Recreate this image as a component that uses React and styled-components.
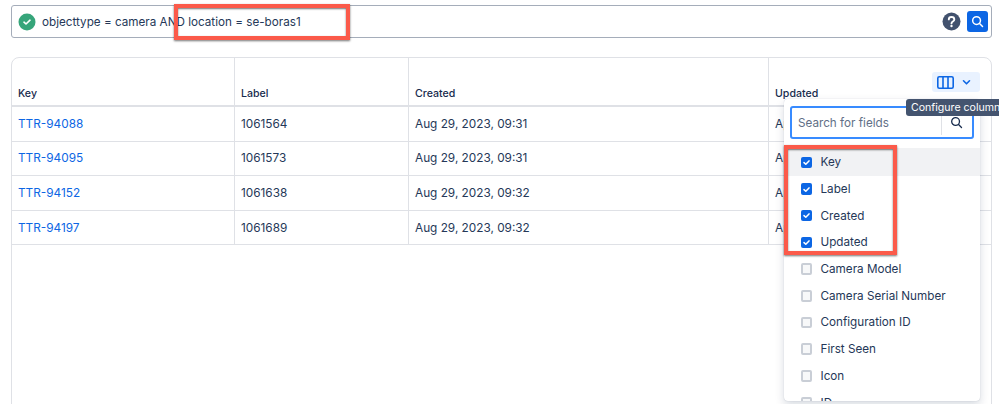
import React from "react";
import styled, { createGlobalStyle } from "styled-components";

const Global = createGlobalStyle`
  html, body { margin: 0; padding: 0; background: #fff; }
  body { font-family: Inter, "Liberation Sans", sans-serif; color: #253858; overflow: hidden; }
  * { box-sizing: border-box; }
`;

const Page = styled.div`
  position: relative;
  width: 999px;
  height: 404px;
  overflow: hidden;
  padding: 5px 7px 0 11px;
  display: flex;
  flex-direction: column;
  gap: 19px;
`;

const QueryBar = styled.div`
  height: 33px;
  border: 1px solid #a5adba;
  border-radius: 3px;
  display: flex;
  align-items: center;
  padding: 0 3px 0 6px;
  font-size: 11.7px;
  color: #253858;
`;

const QueryText = styled.span`
  margin-left: 6px;
  flex: 1;
`;

const HelpIcon = styled.svg`
  width: 19px;
  height: 19px;
  margin-right: 6px;
`;

const SearchButton = styled.button`
  width: 21px;
  height: 21px;
  border: 0;
  padding: 0;
  border-radius: 3px;
  background: #0c66e4;
  display: flex;
  align-items: center;
  justify-content: center;
`;

const TableWrap = styled.div`
  flex: 1;
  margin-bottom: -8px;
  border: 1px solid #dfe1e6;
  border-radius: 8px 8px 0 0;
  display: flex;
  flex-direction: column;
`;

const Row = styled.div`
  display: grid;
  grid-template-columns: 223px 174px 360px 1fr;
  height: ${(p) => p.$h}px;
  border-bottom: ${(p) => p.$head ? "2px" : "1px"} solid #dfe1e6;
`;

const HeadCell = styled.div`
  display: flex;
  align-items: flex-end;
  padding: 0 6px 5px 6px;
  font-size: 10.6px;
  font-weight: 500;
  color: #172b4d;
  border-right: 1px solid #dfe1e6;
  &:last-child { border-right: 0; }
`;

const Cell = styled.div`
  display: flex;
  align-items: center;
  padding: 0 6px;
  font-size: 11.8px;
  color: #253858;
  border-right: 1px solid #dfe1e6;
  overflow: hidden;
  white-space: nowrap;
  &:last-child { border-right: 0; }
`;

const IssueLink = styled.a`
  color: #0c66e4;
`;

const ColumnsButton = styled.div`
  position: absolute;
  left: 932px;
  top: 72px;
  width: 48px;
  height: 20px;
  border-radius: 3px;
  background: #e9f2ff;
  display: flex;
  align-items: center;
  gap: 8px;
  padding-left: 5px;
`;

const Tooltip = styled.div`
  position: absolute;
  left: 906px;
  top: 99px;
  width: 110px;
  height: 17px;
  border-radius: 3px;
  background: #44546f;
  color: #fff;
  font-size: 10.6px;
  line-height: 17px;
  padding-left: 5px;
  white-space: nowrap;
  z-index: 3;
`;

const Popup = styled.div`
  position: absolute;
  left: 784px;
  top: 99px;
  width: 196px;
  height: 302px;
  background: #fff;
  border-radius: 4px;
  box-shadow: 0 4px 10px rgba(9, 30, 66, 0.16), 0 0 1px rgba(9, 30, 66, 0.25);
  overflow: hidden;
  z-index: 2;
`;

const FieldSearch = styled.div`
  margin: 7px 6px 0;
  height: 33px;
  border: 2px solid #388bff;
  border-radius: 3px;
  display: flex;
  align-items: center;
  padding-left: 6px;
`;

const FieldPlaceholder = styled.span`
  flex: 1;
  font-size: 11.7px;
  color: #626f86;
`;

const FieldIconBox = styled.span`
  width: 31px;
  height: 25px;
  padding-right: 2px;
  border-left: 1px solid #dfe1e6;
  display: flex;
  align-items: center;
  justify-content: center;
`;

const FieldList = styled.div`
  margin-top: 9px;
  border-top: 1px solid #f1f2f4;
`;

const FieldRow = styled.div`
  height: 26.7px;
  display: flex;
  align-items: center;
  gap: 8.5px;
  padding-left: 16.5px;
  font-size: 11.7px;
  color: #253858;
  background: ${(p) => (p.$active ? "#f1f2f4" : "transparent")};
`;

const Box = styled.span`
  width: 11.5px;
  height: 11.5px;
  border-radius: 2px;
  background: ${(p) => (p.$on ? "#0c66e4" : "#f7f8f9")};
  border: ${(p) => (p.$on ? "0" : "2px solid #c9ced6")};
  display: flex;
  align-items: center;
  justify-content: center;
  flex: none;
`;

const Highlight = styled.div`
  position: absolute;
  left: ${(p) => p.$x}px;
  top: ${(p) => p.$y}px;
  width: ${(p) => p.$w}px;
  height: ${(p) => p.$h}px;
  border: 4px solid #fb5a4a;
  box-shadow: 0 1px 2px rgba(0, 0, 0, 0.55), inset 0 1px 2px rgba(0, 0, 0, 0.55);
  z-index: 5;
`;

const Magnifier = ({ size = 14, color = "#fff", sw = 1.6 }) => (
  <svg width={size} height={size} viewBox="0 0 14 14" fill="none">
    <circle cx="6" cy="6" r="4.2" stroke={color} strokeWidth={sw} />
    <path d="M9.2 9.2 12.4 12.4" stroke={color} strokeWidth={sw} strokeLinecap="round" />
  </svg>
);

const Check = () => (
  <svg width="9" height="9" viewBox="0 0 9 9" fill="none">
    <path d="M2 4.6 3.8 6.3 7 2.9" stroke="#fff" strokeWidth="1.5" strokeLinecap="round" strokeLinejoin="round" />
  </svg>
);

const rows = [
  ["TTR-94088", "1061564", "Aug 29, 2023, 09:31"],
  ["TTR-94095", "1061573", "Aug 29, 2023, 09:31"],
  ["TTR-94152", "1061638", "Aug 29, 2023, 09:32"],
  ["TTR-94197", "1061689", "Aug 29, 2023, 09:32"],
];

const fields = [
  ["Key", true],
  ["Label", true],
  ["Created", true],
  ["Updated", true],
  ["Camera Model", false],
  ["Camera Serial Number", false],
  ["Configuration ID", false],
  ["First Seen", false],
  ["Icon", false],
  ["ID", false],
];

export default function App() {
  return (
    <Page>
      <Global />
      <QueryBar>
        <svg width="18" height="18" viewBox="0 0 18 18" fill="none">
          <circle cx="9" cy="9" r="8.5" fill="#36a57a" />
          <path d="M6 9.2 8 11 12 7.2" stroke="#fff" strokeWidth="1.6" strokeLinecap="round" strokeLinejoin="round" />
        </svg>
        <QueryText>objecttype = camera AND location = se-boras1</QueryText>
        <HelpIcon viewBox="0 0 19 19">
          <circle cx="9.5" cy="9.5" r="9" fill="#42526e" />
          <path d="M6.8 7.4C6.8 5.9 8 5 9.5 5s2.8.9 2.8 2.4c0 2.2-2.8 2.1-2.8 4" fill="none" stroke="#fff" strokeWidth="1.9" strokeLinecap="round" />
          <circle cx="9.5" cy="14" r="1.2" fill="#fff" />
        </HelpIcon>
        <SearchButton aria-label="Search"><Magnifier size={13} /></SearchButton>
      </QueryBar>
      <TableWrap>
        <Row $head $h={49}>
          <HeadCell>Key</HeadCell>
          <HeadCell>Label</HeadCell>
          <HeadCell>Created</HeadCell>
          <HeadCell>Updated</HeadCell>
        </Row>
        {rows.map((r) => (
          <Row key={r[0]} $h={34.6}>
            <Cell><IssueLink>{r[0]}</IssueLink></Cell>
            <Cell>{r[1]}</Cell>
            <Cell>{r[2]}</Cell>
            <Cell>Ap</Cell>
          </Row>
        ))}
      </TableWrap>
      <ColumnsButton>
        <svg width="17" height="13" viewBox="0 0 17 13" fill="none">
          <rect x="0.8" y="0.8" width="15.4" height="11.4" rx="1.5" stroke="#0c66e4" strokeWidth="1.6" />
          <path d="M6 1V12M11 1V12" stroke="#0c66e4" strokeWidth="1.6" />
        </svg>
        <svg width="9" height="7" viewBox="0 0 9 7" fill="none">
          <path d="M1.5 1.8 4.5 4.8 7.5 1.8" stroke="#0c66e4" strokeWidth="1.6" strokeLinecap="round" strokeLinejoin="round" />
        </svg>
      </ColumnsButton>
      <Popup>
        <FieldSearch>
          <FieldPlaceholder>Search for fields</FieldPlaceholder>
          <FieldIconBox><Magnifier size={13} color="#172b4d" sw={1.4} /></FieldIconBox>
        </FieldSearch>
        <FieldList>
          {fields.map(([name, on], i) => (
            <FieldRow key={name} $active={i === 0}>
              <Box $on={on}>{on && <Check />}</Box>
              {name}
            </FieldRow>
          ))}
        </FieldList>
      </Popup>
      <Tooltip>Configure columns</Tooltip>
      <Highlight $x={174} $y={4} $w={176} $h={36} />
      <Highlight $x={784} $y={145} $w={113} $h={110} />
    </Page>
  );
}
